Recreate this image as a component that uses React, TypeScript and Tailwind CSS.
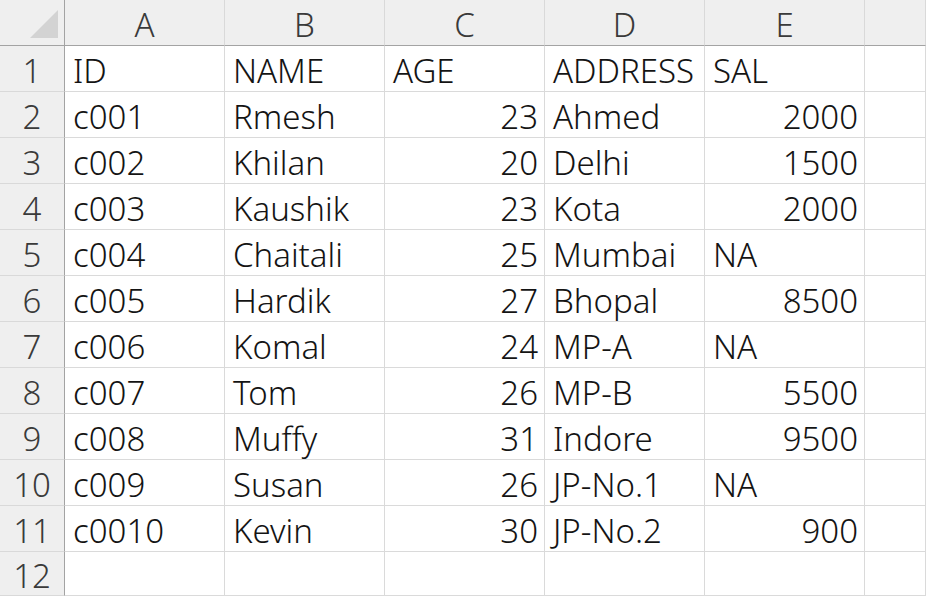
import React from 'react';

type Row = [string, string, string, string, string];

const rows: Row[] = [
  ['ID', 'NAME', 'AGE', 'ADDRESS', 'SAL'],
  ['c001', 'Rmesh', '23', 'Ahmed', '2000'],
  ['c002', 'Khilan', '20', 'Delhi', '1500'],
  ['c003', 'Kaushik', '23', 'Kota', '2000'],
  ['c004', 'Chaitali', '25', 'Mumbai', 'NA'],
  ['c005', 'Hardik', '27', 'Bhopal', '8500'],
  ['c006', 'Komal', '24', 'MP-A', 'NA'],
  ['c007', 'Tom', '26', 'MP-B', '5500'],
  ['c008', 'Muffy', '31', 'Indore', '9500'],
  ['c009', 'Susan', '26', 'JP-No.1', 'NA'],
  ['c0010', 'Kevin', '30', 'JP-No.2', '900'],
];

const columns = ['A', 'B', 'C', 'D', 'E', ''];

// numbers sit on the right like a real sheet
const isNumber = (v: string) => /^\d+$/.test(v);

const App: React.FC = () => {
  return (
    <div
      className="w-[926px] h-[596px] overflow-hidden bg-white text-[33px] leading-none font-light text-[#141414]"
      style={{ fontFamily: '"Noto Sans", "Noto Sans CJK SC", sans-serif' }}
    >
      <div className="grid grid-cols-[65px_160px_160px_160px_160px_160px_1fr] grid-rows-[46px_repeat(11,46px)_1fr] h-full">
        {/* corner */}
        <div className="bg-[#efefef] border-r border-b border-[#a3a3a3] relative">
          <svg className="absolute left-[30px] top-[10px]" width="28" height="28" viewBox="0 0 28 28">
            <polygon points="28,0 28,28 0,28" fill="#d3d3d3" />
          </svg>
        </div>

        {/* column headers */}
        {columns.map((c, i) => (
          <div
            key={`h${i}`}
            className="bg-[#efefef] border-b border-b-[#a3a3a3] border-r border-r-[#d9d9d9] flex items-center justify-center pt-[4px] text-[#3a3a3a]"
          >
            {c}
          </div>
        ))}

        {/* data rows + empty row 12 */}
        {[...rows, null].map((row, r) => (
          <React.Fragment key={`r${r}`}>
            <div className="bg-[#efefef] border-r border-r-[#a3a3a3] border-b border-b-[#d9d9d9] flex items-center justify-center pt-[4px] text-[#3a3a3a]">
              {r + 1}
            </div>
            {columns.map((_, c) => {
              const v = row && c < 5 ? row[c] : '';
              return (
                <div
                  key={`c${r}-${c}`}
                  className={`border-r border-b border-[#dadada] flex items-center pt-[4px] pl-[8px] pr-[6px] whitespace-nowrap ${
                    isNumber(v) ? 'justify-end' : 'justify-start'
                  }`}
                >
                  {v}
                </div>
              );
            })}
          </React.Fragment>
        ))}
      </div>
    </div>
  );
};

export default App;
